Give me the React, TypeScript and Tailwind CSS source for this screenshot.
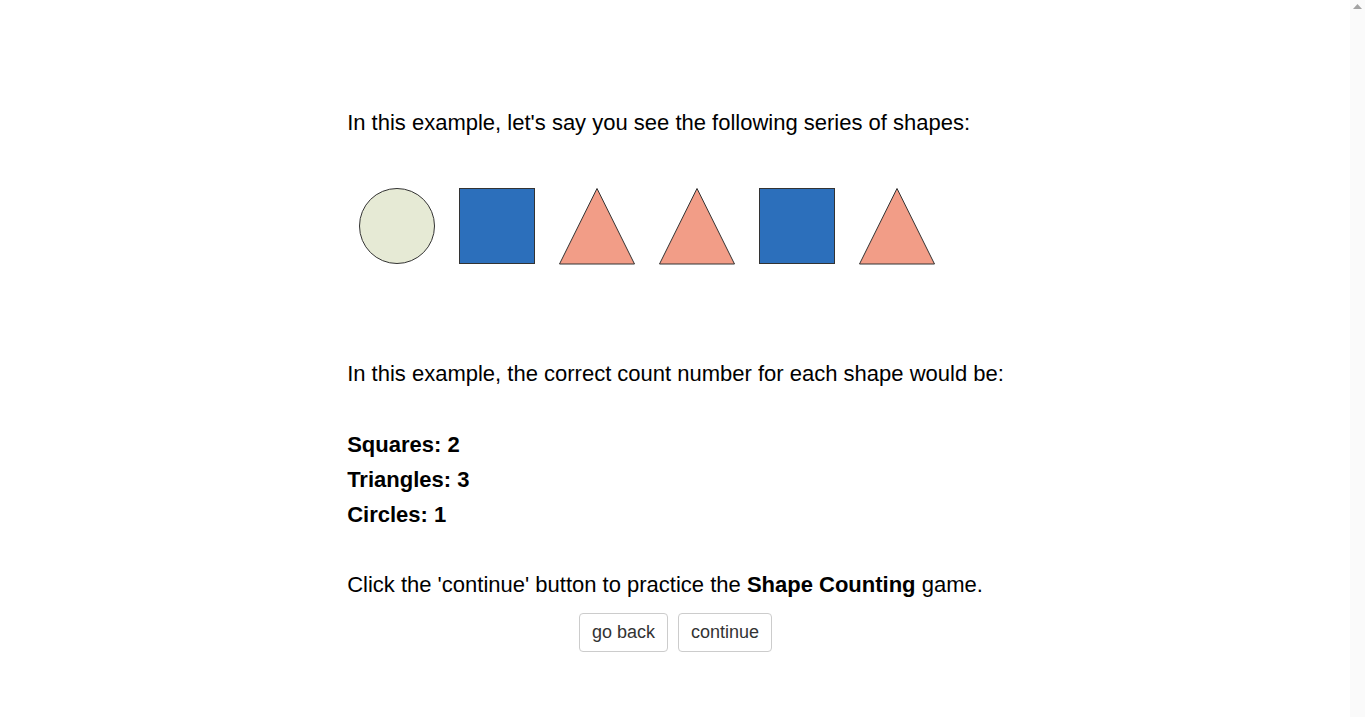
import React from 'react';

const Circle = () => (
  <svg width="100" height="100" viewBox="0 0 100 100">
    <circle cx="50" cy="50" r="37.5" fill="#e6ead5" stroke="#333" strokeWidth="1" />
  </svg>
);

const Square = () => (
  <svg width="100" height="100" viewBox="0 0 100 100">
    <rect x="12.5" y="12.5" width="75" height="75" fill="#2c6fbb" stroke="#333" strokeWidth="1" />
  </svg>
);

const Triangle = () => (
  <svg width="100" height="100" viewBox="0 0 100 100">
    <polygon points="50,12.5 87.5,88 12.5,88" fill="#f29d87" stroke="#333" strokeWidth="1" />
  </svg>
);

const App = () => {
  return (
    <div className="flex h-screen w-full overflow-hidden bg-white">
      <div
        className="flex-1 text-black flex flex-col items-center pt-[105px] pl-[1px]"
        style={{ fontFamily: '"Liberation Sans", Arial, sans-serif' }}
      >
        <div className="text-left text-[22px] leading-[1.6em]">
          <p>In this example, let's say you see the following series of shapes:</p>
          <div className="flex mt-[36px]">
            <Circle />
            <Square />
            <Triangle />
            <Triangle />
            <Square />
            <Triangle />
          </div>
          <p className="mt-[80px]">In this example, the correct count number for each shape would be:</p>
          <br />
          <p className="font-bold">Squares: 2</p>
          <p className="font-bold">Triangles: 3</p>
          <p className="font-bold">Circles: 1</p>
          <br />
          <p>
            Click the 'continue' button to practice the <b>Shape Counting</b> game.
          </p>
        </div>
        <div className="flex gap-[10px] mt-[10px]">
          <button className="px-3 py-[6px] text-[18px] leading-[1.42857] text-[#333] bg-white border border-[#ccc] rounded">
            go back
          </button>
          <button className="px-3 py-[6px] text-[18px] leading-[1.42857] text-[#333] bg-white border border-[#ccc] rounded">
            continue
          </button>
        </div>
      </div>
      {/* scrollbar track */}
      <div className="w-[15px] shrink-0 bg-[#fafafa] flex justify-center pt-[4px]">
        <svg width="9" height="6" viewBox="0 0 9 6">
          <polygon points="4.5,0 9,5 0,5" fill="#a3a3a3" />
        </svg>
      </div>
    </div>
  );
};

export default App;
